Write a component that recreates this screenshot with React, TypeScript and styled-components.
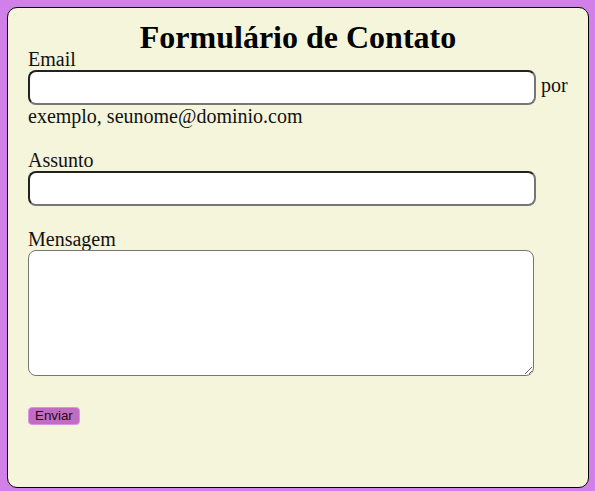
import styled, { createGlobalStyle } from "styled-components";

const GlobalStyle = createGlobalStyle`
  html, body {
    margin: 0;
    padding: 0;
  }
  body {
    background: #d080e8;
    padding: 7px;
    box-sizing: border-box;
    min-height: 100vh;
    font-family: "Liberation Serif", "Times New Roman", serif;
  }
`;

const Card = styled.div`
  box-sizing: border-box;
  height: calc(100vh - 10px);
  width: 582px;
  background: #f5f5dc;
  border: 1px solid #000;
  border-radius: 10px;
  padding: 18px 20px 20px;
`;

const Title = styled.h1`
  margin: 0;
  font-size: 32px;
  line-height: 22px;
  text-align: center;
  color: #000;
`;

const Form = styled.form`
  font-size: 20px;
  line-height: 22px;
  color: #111;
`;

const Label = styled.label``;

const TextInput = styled.input`
  box-sizing: border-box;
  width: 508px;
  height: 35px;
  padding: 1px 6px;
  border-width: 2px;
  border-style: solid;
  border-color: #222 #767676 #767676 #222;
  border-radius: 8px;
  background: #fff;
  font-family: "Liberation Sans", Arial, sans-serif;
  font-size: 13.33px;
  vertical-align: baseline;
`;

const Hint = styled.span``;

const MessageArea = styled.textarea`
  box-sizing: border-box;
  width: 506px;
  height: 126px;
  padding: 2px;
  border: 1px solid #767676;
  border-radius: 8px;
  background: #fff;
  font-family: "Liberation Mono", monospace;
  font-size: 13.33px;
  vertical-align: baseline;
`;

const SendButton = styled.button`
  box-sizing: border-box;
  height: 18px;
  padding: 0 6px;
  border: 1px solid #e090e8;
  border-radius: 4px;
  background: #c06cc0;
  color: #2a0818;
  font-family: "Liberation Sans", Arial, sans-serif;
  font-size: 13.33px;
  line-height: 16px;
  cursor: pointer;
`;

export default function App() {
  return (
    <>
      <GlobalStyle />
      <Card>
        <Title>Formulário de Contato</Title>
        <Form onSubmit={(e) => e.preventDefault()}>
          <Label htmlFor="email">Email</Label>
          <br />
          <TextInput id="email" type="email" /> <Hint>por exemplo, seunome@dominio.com</Hint>
          <br />
          <br />
          <Label htmlFor="assunto">Assunto</Label>
          <br />
          <TextInput id="assunto" type="text" />
          <br />
          <br />
          <Label htmlFor="mensagem">Mensagem</Label>
          <br />
          <MessageArea id="mensagem" />
          <br />
          <br />
          <SendButton type="submit">Enviar</SendButton>
        </Form>
      </Card>
    </>
  );
}
